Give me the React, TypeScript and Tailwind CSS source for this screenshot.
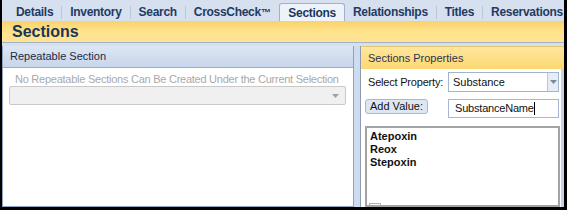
const TABS = ['Details', 'Inventory', 'Search', 'CrossCheck', 'Sections', 'Relationships', 'Titles', 'Reservations'];
const ACTIVE = 'Sections';
const VALUES = ['Atepoxin', 'Reox', 'Stepoxin'];

function Caret({ color = '#7d8796' }: { color?: string }) {
  return (
    <svg width="7" height="4" viewBox="0 0 7 4">
      <path d="M0 0h7L3.5 4z" fill={color} />
    </svg>
  );
}

function TabLabel({ tab }: { tab: string }) {
  if (tab === 'CrossCheck') {
    return (
      <>
        CrossCheck<span className="text-[10px] tracking-[-0.5px]">™</span>
      </>
    );
  }
  return <>{tab}</>;
}

export default function App() {
  return (
    <div
      className="w-[567px] h-[210px] bg-black pl-[2px] pr-[3px] pb-[3px] overflow-hidden"
      style={{ fontFamily: '"Liberation Sans", Arial, sans-serif' }}
    >
      <div className="h-full flex flex-col bg-[#d6e0ef]">
        {/* tab strip */}
        <div className="h-[21px] flex items-end pl-[6px] shrink-0 whitespace-nowrap overflow-hidden">
          {TABS.map((tab, i) => {
            const active = tab === ACTIVE;
            const nextActive = TABS[i + 1] === ACTIVE;
            if (active) {
              return (
                <div
                  key={tab}
                  className="h-[18px] ml-[1px] px-[8px] flex items-center bg-[#eef3fa] border border-b-0 border-[#9fb2cc] rounded-t-[3px] text-[12px] font-bold tracking-[-0.3px] text-[#1b365c]"
                >
                  {tab}
                </div>
              );
            }
            return (
              <div key={tab} className="h-[18px] flex items-center">
                <span className="px-[8px] text-[12px] font-bold tracking-[-0.3px] text-[#1f3b63]">
                  <TabLabel tab={tab} />
                </span>
                {!nextActive && i < TABS.length - 1 && <span className="w-px h-[13px] bg-[#b9c7da]" />}
              </div>
            );
          })}
        </div>

        {/* yellow title */}
        <div className="h-[22px] shrink-0 flex items-center pl-[10px] bg-gradient-to-b from-[#f9d26a] via-[#ffe38c] to-[#ffe493] border-b border-[#a2b1c8]">
          <span className="text-[16px] font-bold text-[#1a3558] leading-none">Sections</span>
        </div>

        <div className="h-[3px] shrink-0" />

        {/* panels */}
        <div className="flex-1 flex min-h-0">
          {/* left panel */}
          <div className="w-[353px] flex flex-col border-l border-r border-b border-[#8ea2c2] bg-white">
            <div className="h-[22px] shrink-0 flex items-center pl-[7px] bg-gradient-to-b from-[#dce6f4] to-[#c8d6eb] border-b border-[#9aadc8]">
              <span className="text-[11px] text-[#1d2a44]">Repeatable Section</span>
            </div>
            <div className="pt-[4px] px-[6px]">
              <div className="pl-[6px] text-[11px] tracking-[-0.25px] text-[#a9a9a9] leading-[14px] whitespace-nowrap">
                No Repeatable Sections Can Be Created Under the Current Selection
              </div>
              <div className="w-[337px] h-[19px] bg-[#f0f0f0] border border-[#c9c9c9] rounded-[2px] flex items-center justify-end pr-[6px]">
                <Caret color="#a0a0a0" />
              </div>
            </div>
          </div>

          {/* splitter */}
          <div className="w-[6px] bg-[#cfdcef]" />

          {/* right panel */}
          <div className="flex-1 flex flex-col border-l border-[#8c9bb0]">
            <div className="h-[23px] shrink-0 flex items-center pl-[7px] bg-gradient-to-b from-[#ffe69c] to-[#fdd873] border-t border-[#e5c670]">
              <span className="text-[11px] text-[#2a3550]">Sections Properties</span>
            </div>
            <div className="flex-1 bg-white border-r-[3px] border-[#c5d3e8] flex flex-col pl-[4px] pr-[1px]">
              <div className="mt-[3px] h-[20px] flex items-center">
                <span className="w-[83px] pl-[3px] text-[11px] tracking-[-0.2px] text-[#111]">Select Property:</span>
                <div className="w-[111px] h-[20px] border border-[#a5b4c9] flex items-center">
                  <span className="flex-1 pl-[4px] text-[11px] text-[#111]">Substance</span>
                  <div className="w-[11px] h-full bg-[#e6edf7] border-l border-[#b8c6d8] flex items-center justify-center">
                    <Caret />
                  </div>
                </div>
              </div>
              <div className="mt-[7px] h-[19px] flex items-center">
                <div className="w-[83px] flex items-start h-full">
                  <div className="w-[63px] h-[15px] bg-[#dde7f4] border border-[#a6b8d2] rounded-[3px] flex items-center justify-center text-[11px] text-[#111]">
                    Add Value:
                  </div>
                </div>
                <div className="w-[111px] h-[19px] border border-[#a8b8d0] flex items-center pl-[6px] text-[11px] tracking-[-0.2px] text-[#111]">
                  SubstanceName
                  <span className="w-px h-[13px] bg-black" />
                </div>
              </div>
              <div className="mt-[8px] w-[195px] flex-1 border-2 border-[#a3a3a3] pl-[3px] pt-[2px] relative">
                {VALUES.map((v) => (
                  <div key={v} className="text-[11px] font-bold leading-[13px] text-[#111]">
                    {v}
                  </div>
                ))}
                <div className="absolute left-[2px] bottom-0 w-[12px] h-[2px] border border-[#b0b0b0] border-b-0" />
              </div>
            </div>
          </div>
        </div>
      </div>
    </div>
  );
}
